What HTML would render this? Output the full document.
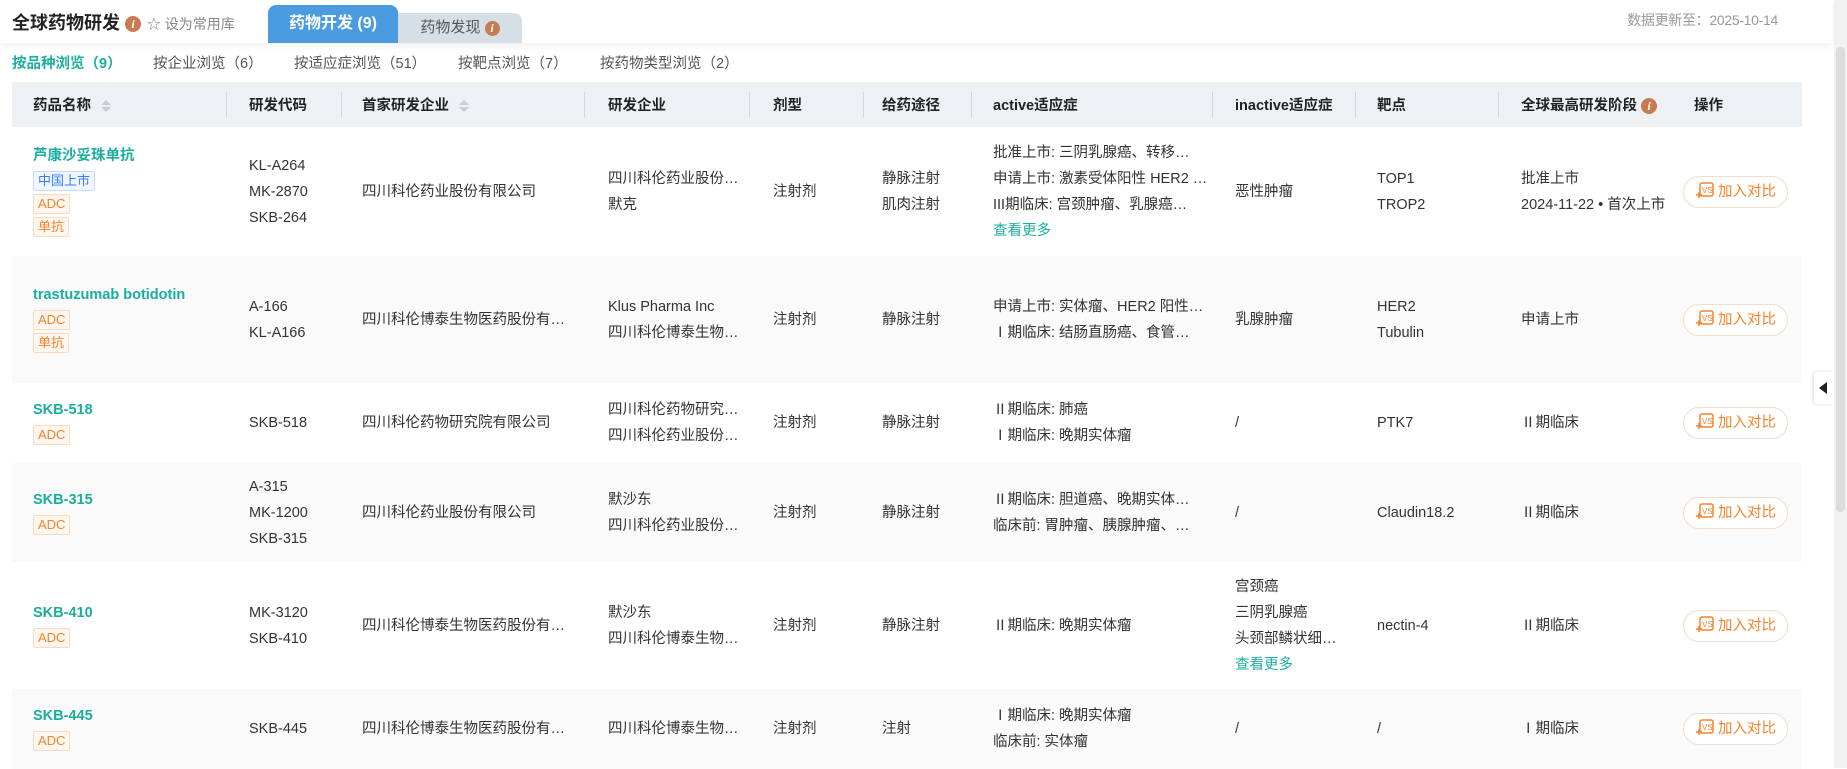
<!DOCTYPE html>
<html><head><meta charset="utf-8">
<style>
*{box-sizing:border-box;margin:0;padding:0}
body{width:1847px;height:768px;overflow:hidden;background:#fff;font-family:"Liberation Sans","Noto Sans CJK SC",sans-serif;color:#333;font-size:14.5px;position:relative}
.top{position:absolute;left:0;top:0;width:1832px;height:43px;background:#fff;box-shadow:0 3px 6px rgba(0,0,0,.06);z-index:2}
.title{position:absolute;left:12px;top:9px;font-size:18px;font-weight:bold;color:#222;white-space:nowrap}
.info{display:inline-block;width:16px;height:16px;border-radius:50%;background:#c87a51;color:#fff;font-size:12px;font-weight:bold;font-style:italic;text-align:center;line-height:16px;font-family:"Liberation Serif",serif;vertical-align:middle}
.fav{color:#888;font-size:14px;font-weight:normal;margin-left:2px}
.tab1{position:absolute;left:268px;top:5px;width:130px;height:38px;background:#4a9be0;border-radius:8px 8px 0 0;color:#fff;font-weight:bold;font-size:16px;text-align:center;line-height:38px}
.tab2{position:absolute;left:398px;top:13px;width:124px;height:30px;background:#d6dfe5;border-radius:0 8px 0 0;color:#555;font-size:15px;text-align:center;line-height:30px}
.upd{position:absolute;right:54px;top:10px;color:#999;font-size:14px;letter-spacing:-0.3px}
.sub{position:absolute;top:52px;font-size:14.5px;color:#555}
.sub.on{color:#1aae9f;font-weight:bold}
table{position:absolute;left:12px;top:82px;width:1790px;border-collapse:collapse;table-layout:fixed}
th{height:45px;background:#eef1f3;text-align:left;font-weight:bold;color:#222;font-size:14.5px;position:relative}
th.sep:after{content:"";position:absolute;right:0;top:10px;height:25px;border-right:1px solid #d3d7da}
td{vertical-align:middle;line-height:26px;white-space:nowrap;overflow:hidden}
tr.g td{background:#fafafa}
td.op,th.op{background:#fff;box-shadow:-6px 0 8px rgba(0,0,0,.05);position:relative}
th.op{background:#eef1f3}
.sort{display:inline-block;width:8px;vertical-align:middle;margin-left:10px}
.sort i{display:block;width:0;height:0;border-left:5px solid transparent;border-right:5px solid transparent;margin:2px 0}
.sort i.u{border-bottom:5px solid #c8cdd1}.sort i.d{border-top:5px solid #c8cdd1}
.nm{color:#1aae9f;font-weight:bold;display:block;line-height:24px}
.tag{display:block;width:max-content;font-size:13px;line-height:18px;padding:0 4px;border:1px solid #fcd9bf;background:#fff6ef;color:#f5832a;border-radius:2px;margin:3px 0 3px}
.tag.b{border-color:#c6dbff;background:#f0f6ff;color:#3a7cf5}
.more{color:#1aae9f}
.btn{display:inline-block;width:105px;height:32px;border:1px solid #f3dccb;border-radius:16px;color:#f5832a;font-size:14.5px;line-height:30px;text-align:center;background:#fff}
.btn svg{vertical-align:-4px;margin-right:3px}
</style></head><body>
<div class="top">
<div class="title">全球药物研发 <span class="info">i</span><span class="fav"> ☆ 设为常用库</span></div>
<div class="tab1">药物开发 (9)</div>
<div class="tab2">药物发现 <span class="info" style="width:15px;height:15px;line-height:15px">i</span></div>
<div class="upd">数据更新至：2025-10-14</div>
</div>
<div class="sub on" style="left:12px">按品种浏览（9）</div>
<div class="sub" style="left:153px">按企业浏览（6）</div>
<div class="sub" style="left:294px">按适应症浏览（51）</div>
<div class="sub" style="left:458px">按靶点浏览（7）</div>
<div class="sub" style="left:600px">按药物类型浏览（2）</div>

<table>
<colgroup><col style="width:215px"><col style="width:115px"><col style="width:243px"><col style="width:165px"><col style="width:114px"><col style="width:108px"><col style="width:241px"><col style="width:143px"><col style="width:143px"><col style="width:174px"><col style="width:129px"></colgroup>
<tr>
<th class="sep" style="padding-left:21px">药品名称<span class="sort"><i class="u"></i><i class="d"></i></span></th>
<th class="sep" style="padding-left:22px">研发代码</th>
<th class="sep" style="padding-left:20px">首家研发企业<span class="sort"><i class="u"></i><i class="d"></i></span></th>
<th class="sep" style="padding-left:23px">研发企业</th>
<th class="sep" style="padding-left:23px">剂型</th>
<th class="sep" style="padding-left:18px">给药途径</th>
<th class="sep" style="padding-left:21px">active适应症</th>
<th class="sep" style="padding-left:22px">inactive适应症</th>
<th class="sep" style="padding-left:21px">靶点</th>
<th style="padding-left:22px">全球最高研发阶段 <span class="info">i</span></th>
<th class="op" style="padding-left:21px">操作</th>
</tr>
<tr style="height:129px">
<td style="padding-left:21px"><span class="nm">芦康沙妥珠单抗</span><span class="tag b">中国上市</span><span class="tag">ADC</span><span class="tag">单抗</span></td>
<td style="padding-left:22px">KL-A264<br>MK-2870<br>SKB-264</td>
<td style="padding-left:20px">四川科伦药业股份有限公司</td>
<td style="padding-left:23px">四川科伦药业股份…<br>默克</td>
<td style="padding-left:23px">注射剂</td>
<td style="padding-left:18px">静脉注射<br>肌肉注射</td>
<td style="padding-left:21px">批准上市: 三阴乳腺癌、转移…<br>申请上市: 激素受体阳性 HER2 …<br>III期临床: 宫颈肿瘤、乳腺癌…<br><span class="more">查看更多</span></td>
<td style="padding-left:22px">恶性肿瘤</td>
<td style="padding-left:21px">TOP1<br>TROP2</td>
<td style="padding-left:22px">批准上市<br>2024-11-22 • 首次上市</td>
<td class="op" style="padding-left:10px"><span class="btn"><svg width="20" height="18" viewBox="0 0 20 18"><rect x="5" y="1" width="13" height="13" rx="2" fill="none" stroke="#f5832a" stroke-width="1.5"/><text x="7" y="11" font-size="8" fill="#f5832a" font-family="Liberation Sans">VS</text><path d="M1 13h6M4 10v6" stroke="#f5832a" stroke-width="1.5"/></svg>加入对比</span></td>
</tr>
<tr class="g" style="height:127px">
<td style="padding-left:21px"><span class="nm">trastuzumab botidotin</span><span class="tag">ADC</span><span class="tag">单抗</span></td>
<td style="padding-left:22px">A-166<br>KL-A166</td>
<td style="padding-left:20px">四川科伦博泰生物医药股份有…</td>
<td style="padding-left:23px">Klus Pharma Inc<br>四川科伦博泰生物…</td>
<td style="padding-left:23px">注射剂</td>
<td style="padding-left:18px">静脉注射</td>
<td style="padding-left:21px">申请上市: 实体瘤、HER2 阳性…<br>Ⅰ期临床: 结肠直肠癌、食管…</td>
<td style="padding-left:22px">乳腺肿瘤</td>
<td style="padding-left:21px">HER2<br>Tubulin</td>
<td style="padding-left:22px">申请上市</td>
<td class="op" style="padding-left:10px"><span class="btn"><svg width="20" height="18" viewBox="0 0 20 18"><rect x="5" y="1" width="13" height="13" rx="2" fill="none" stroke="#f5832a" stroke-width="1.5"/><text x="7" y="11" font-size="8" fill="#f5832a" font-family="Liberation Sans">VS</text><path d="M1 13h6M4 10v6" stroke="#f5832a" stroke-width="1.5"/></svg>加入对比</span></td>
</tr>
<tr style="height:80px">
<td style="padding-left:21px"><span class="nm">SKB-518</span><span class="tag">ADC</span></td>
<td style="padding-left:22px">SKB-518</td>
<td style="padding-left:20px">四川科伦药物研究院有限公司</td>
<td style="padding-left:23px">四川科伦药物研究…<br>四川科伦药业股份…</td>
<td style="padding-left:23px">注射剂</td>
<td style="padding-left:18px">静脉注射</td>
<td style="padding-left:21px">Ⅱ期临床: 肺癌<br>Ⅰ期临床: 晚期实体瘤</td>
<td style="padding-left:22px">/</td>
<td style="padding-left:21px">PTK7</td>
<td style="padding-left:22px">Ⅱ期临床</td>
<td class="op" style="padding-left:10px"><span class="btn"><svg width="20" height="18" viewBox="0 0 20 18"><rect x="5" y="1" width="13" height="13" rx="2" fill="none" stroke="#f5832a" stroke-width="1.5"/><text x="7" y="11" font-size="8" fill="#f5832a" font-family="Liberation Sans">VS</text><path d="M1 13h6M4 10v6" stroke="#f5832a" stroke-width="1.5"/></svg>加入对比</span></td>
</tr>
<tr class="g" style="height:99px">
<td style="padding-left:21px"><span class="nm">SKB-315</span><span class="tag">ADC</span></td>
<td style="padding-left:22px">A-315<br>MK-1200<br>SKB-315</td>
<td style="padding-left:20px">四川科伦药业股份有限公司</td>
<td style="padding-left:23px">默沙东<br>四川科伦药业股份…</td>
<td style="padding-left:23px">注射剂</td>
<td style="padding-left:18px">静脉注射</td>
<td style="padding-left:21px">Ⅱ期临床: 胆道癌、晚期实体…<br>临床前: 胃肿瘤、胰腺肿瘤、…</td>
<td style="padding-left:22px">/</td>
<td style="padding-left:21px">Claudin18.2</td>
<td style="padding-left:22px">Ⅱ期临床</td>
<td class="op" style="padding-left:10px"><span class="btn"><svg width="20" height="18" viewBox="0 0 20 18"><rect x="5" y="1" width="13" height="13" rx="2" fill="none" stroke="#f5832a" stroke-width="1.5"/><text x="7" y="11" font-size="8" fill="#f5832a" font-family="Liberation Sans">VS</text><path d="M1 13h6M4 10v6" stroke="#f5832a" stroke-width="1.5"/></svg>加入对比</span></td>
</tr>
<tr style="height:127px">
<td style="padding-left:21px"><span class="nm">SKB-410</span><span class="tag">ADC</span></td>
<td style="padding-left:22px">MK-3120<br>SKB-410</td>
<td style="padding-left:20px">四川科伦博泰生物医药股份有…</td>
<td style="padding-left:23px">默沙东<br>四川科伦博泰生物…</td>
<td style="padding-left:23px">注射剂</td>
<td style="padding-left:18px">静脉注射</td>
<td style="padding-left:21px">Ⅱ期临床: 晚期实体瘤</td>
<td style="padding-left:22px">宫颈癌<br>三阴乳腺癌<br>头颈部鳞状细…<br><span class="more">查看更多</span></td>
<td style="padding-left:21px">nectin-4</td>
<td style="padding-left:22px">Ⅱ期临床</td>
<td class="op" style="padding-left:10px"><span class="btn"><svg width="20" height="18" viewBox="0 0 20 18"><rect x="5" y="1" width="13" height="13" rx="2" fill="none" stroke="#f5832a" stroke-width="1.5"/><text x="7" y="11" font-size="8" fill="#f5832a" font-family="Liberation Sans">VS</text><path d="M1 13h6M4 10v6" stroke="#f5832a" stroke-width="1.5"/></svg>加入对比</span></td>
</tr>
<tr class="g" style="height:80px">
<td style="padding-left:21px"><span class="nm">SKB-445</span><span class="tag">ADC</span></td>
<td style="padding-left:22px">SKB-445</td>
<td style="padding-left:20px">四川科伦博泰生物医药股份有…</td>
<td style="padding-left:23px">四川科伦博泰生物…</td>
<td style="padding-left:23px">注射剂</td>
<td style="padding-left:18px">注射</td>
<td style="padding-left:21px">Ⅰ期临床: 晚期实体瘤<br>临床前: 实体瘤</td>
<td style="padding-left:22px">/</td>
<td style="padding-left:21px">/</td>
<td style="padding-left:22px">Ⅰ期临床</td>
<td class="op" style="padding-left:10px"><span class="btn"><svg width="20" height="18" viewBox="0 0 20 18"><rect x="5" y="1" width="13" height="13" rx="2" fill="none" stroke="#f5832a" stroke-width="1.5"/><text x="7" y="11" font-size="8" fill="#f5832a" font-family="Liberation Sans">VS</text><path d="M1 13h6M4 10v6" stroke="#f5832a" stroke-width="1.5"/></svg>加入对比</span></td>
</tr>
</table>
<div style="position:absolute;left:1814px;top:372px;width:20px;height:32px;background:#fff;box-shadow:-1px 0 4px rgba(0,0,0,.15);border-radius:4px 0 0 4px"><div style="position:absolute;left:5px;top:10px;border-right:8px solid #222;border-top:6px solid transparent;border-bottom:6px solid transparent"></div></div>
<div style="position:absolute;left:1834px;top:0;width:13px;height:768px;background:#f1f1f1"></div>
<div style="position:absolute;left:1836px;top:47px;width:9px;height:465px;background:#dcdcdc;border-radius:4px"></div>
</body></html>
